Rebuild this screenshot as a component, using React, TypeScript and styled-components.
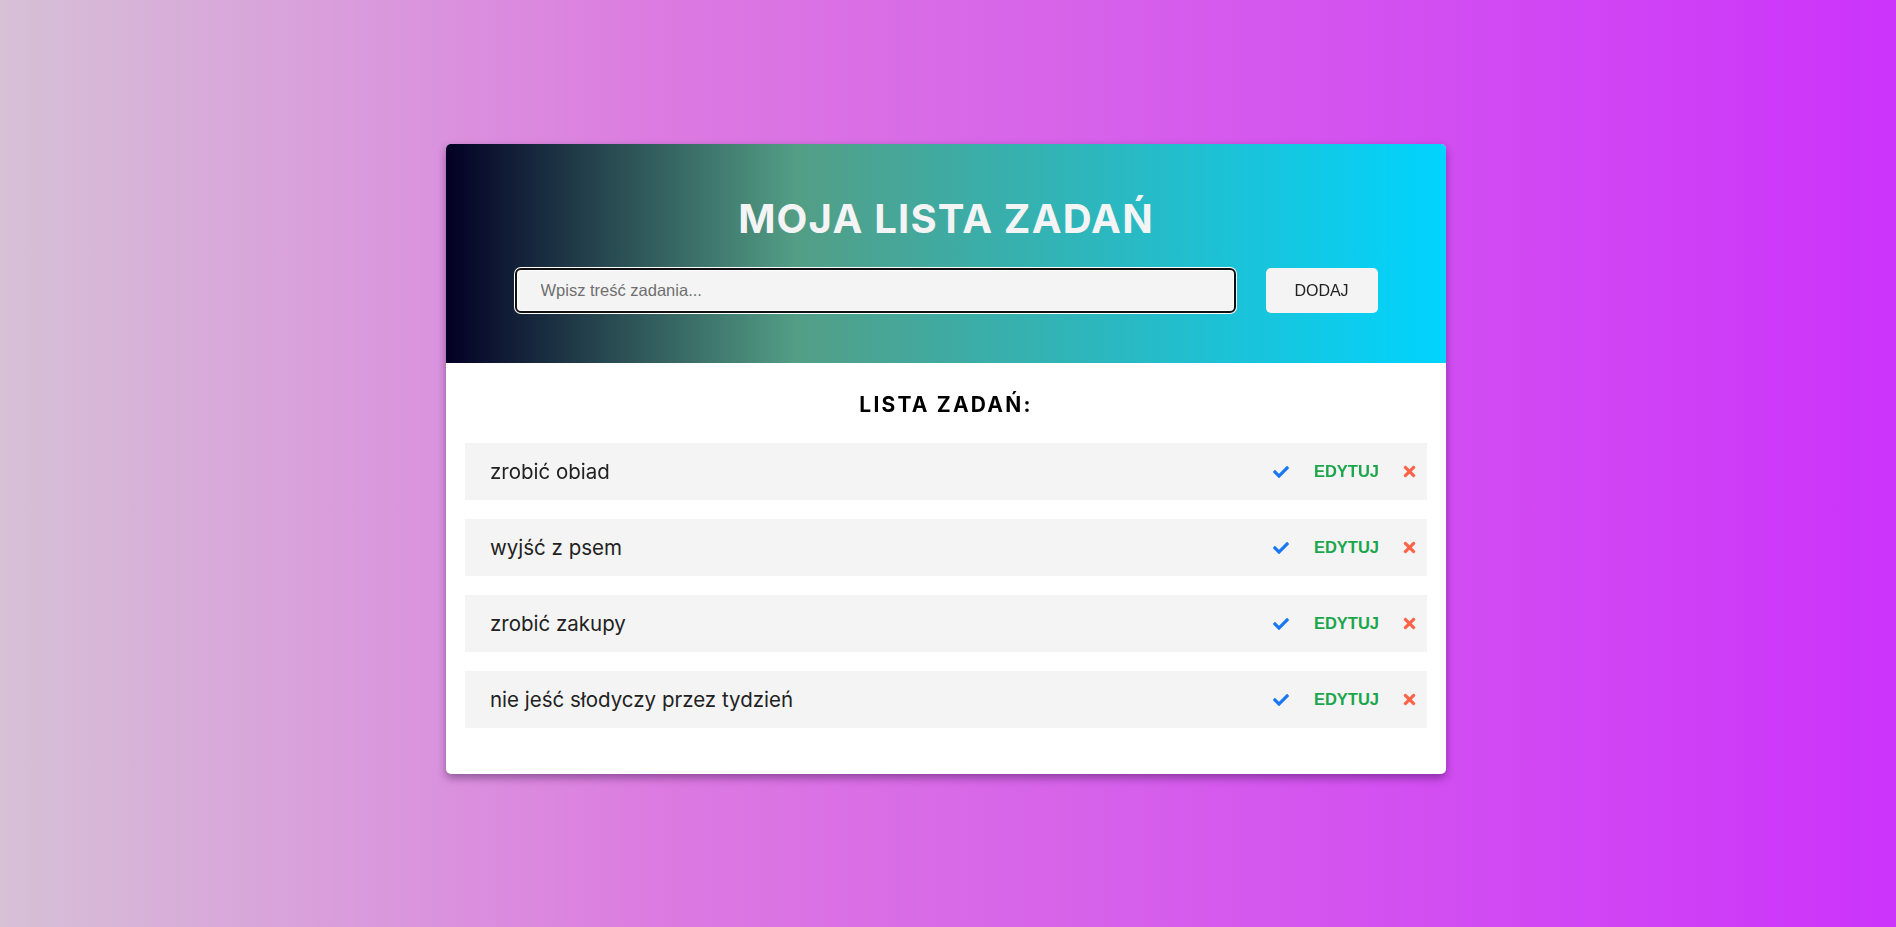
import React from "react";
import styled, { createGlobalStyle } from "styled-components";
import { FaCheck, FaTimes } from "react-icons/fa";

const GlobalStyle = createGlobalStyle`
  html, body {
    margin: 0;
    padding: 0;
  }
  body {
    min-height: 100vh;
    background: linear-gradient(90deg, rgb(214, 193, 214) 0%, rgb(220, 122, 225) 35%, rgb(204, 51, 251) 100%);
    font-family: Inter, "Liberation Sans", sans-serif;
  }
`;

const Page = styled.div`
  min-height: 100vh;
  box-sizing: border-box;
  padding: 144px 0 40px;
  display: flex;
  justify-content: center;
  align-items: flex-start;
`;

const Card = styled.div`
  width: 1000px;
  margin-right: 4px;
  background: #ffffff;
  border-radius: 5px;
  overflow: hidden;
  box-shadow: 0 4px 9px rgba(30, 0, 50, 0.4);
`;

const Header = styled.header`
  padding: 51px 0 50px;
  background: linear-gradient(90deg, rgb(2, 0, 36) 0%, rgb(83, 158, 133) 35%, rgb(0, 212, 255) 100%);
  display: flex;
  flex-direction: column;
  align-items: center;
`;

const Title = styled.h1`
  margin: 0 0 25px;
  font-family: Inter, "Liberation Sans", sans-serif;
  font-weight: 700;
  font-size: 40px;
  line-height: 48px;
  letter-spacing: 1.2px;
  color: #f4f4f4;
`;

const InputRow = styled.div`
  display: flex;
  align-items: center;
  gap: 30px;
`;

const TaskInput = styled.input`
  box-sizing: border-box;
  width: 721px;
  height: 45px;
  padding: 0 0 0 24px;
  border: 2px solid #101010;
  border-radius: 6px;
  box-shadow: 0 0 0 1px #ffffff, inset 0 0 0 1px #ffffff;
  background: #f4f4f4;
  font-family: "Liberation Sans", Arial, sans-serif;
  font-size: 16.5px;
  color: #222;
  outline: none;
  &::placeholder {
    color: #6f6f6f;
  }
`;

const AddButton = styled.button`
  width: 112px;
  height: 45px;
  border: none;
  border-radius: 5px;
  background: #f4f4f4;
  font-family: "Liberation Sans", Arial, sans-serif;
  font-size: 16px;
  color: #222;
  cursor: pointer;
`;

const Body = styled.section`
  padding: 29px 19px 46px;
  display: flex;
  flex-direction: column;
`;

const ListTitle = styled.h2`
  margin: 0 0 26px;
  text-align: center;
  font-family: Inter, "Liberation Sans", sans-serif;
  font-weight: 700;
  font-size: 21px;
  line-height: 25px;
  letter-spacing: 2.2px;
  color: #000;
`;

const List = styled.ul`
  list-style: none;
  margin: 0;
  padding: 0;
  display: flex;
  flex-direction: column;
  gap: 19px;
`;

const Item = styled.li`
  height: 57px;
  padding: 0 9px 0 25px;
  background: #f4f4f4;
  display: flex;
  align-items: center;
  justify-content: space-between;
`;

const ItemText = styled.span`
  font-family: Inter, "Liberation Sans", sans-serif;
  font-size: 20.5px;
  font-weight: 400;
  color: #222;
`;

const Actions = styled.div`
  display: flex;
  align-items: center;
  gap: 25px;
`;

const IconButton = styled.button<{ $color: string; $shift?: number }>`
  padding: 0;
  margin-left: ${(p) => p.$shift ?? 0}px;
  border: none;
  background: none;
  display: flex;
  align-items: center;
  color: ${(p) => p.$color};
  cursor: pointer;
`;

const EditButton = styled.button`
  padding: 0;
  border: none;
  background: none;
  font-family: "Liberation Sans", Arial, sans-serif;
  font-weight: 700;
  font-size: 16.5px;
  color: #1ca64c;
  cursor: pointer;
`;

const tasks = [
  "zrobić obiad",
  "wyjść z psem",
  "zrobić zakupy",
  "nie jeść słodyczy przez tydzień",
];

export default function App() {
  return (
    <>
      <GlobalStyle />
      <Page>
        <Card>
          <Header>
            <Title>MOJA LISTA ZADAŃ</Title>
            <InputRow>
              <TaskInput placeholder="Wpisz treść zadania..." autoFocus />
              <AddButton>DODAJ</AddButton>
            </InputRow>
          </Header>
          <Body>
            <ListTitle>LISTA ZADAŃ:</ListTitle>
            <List>
              {tasks.map((t) => (
                <Item key={t}>
                  <ItemText>{t}</ItemText>
                  <Actions>
                    <IconButton $color="#1877f2" $shift={-1}>
                      <FaCheck size={16} />
                    </IconButton>
                    <EditButton>EDYTUJ</EditButton>
                    <IconButton $color="#ff6347" $shift={-3}>
                      <FaTimes size={17} />
                    </IconButton>
                  </Actions>
                </Item>
              ))}
            </List>
          </Body>
        </Card>
      </Page>
    </>
  );
}
